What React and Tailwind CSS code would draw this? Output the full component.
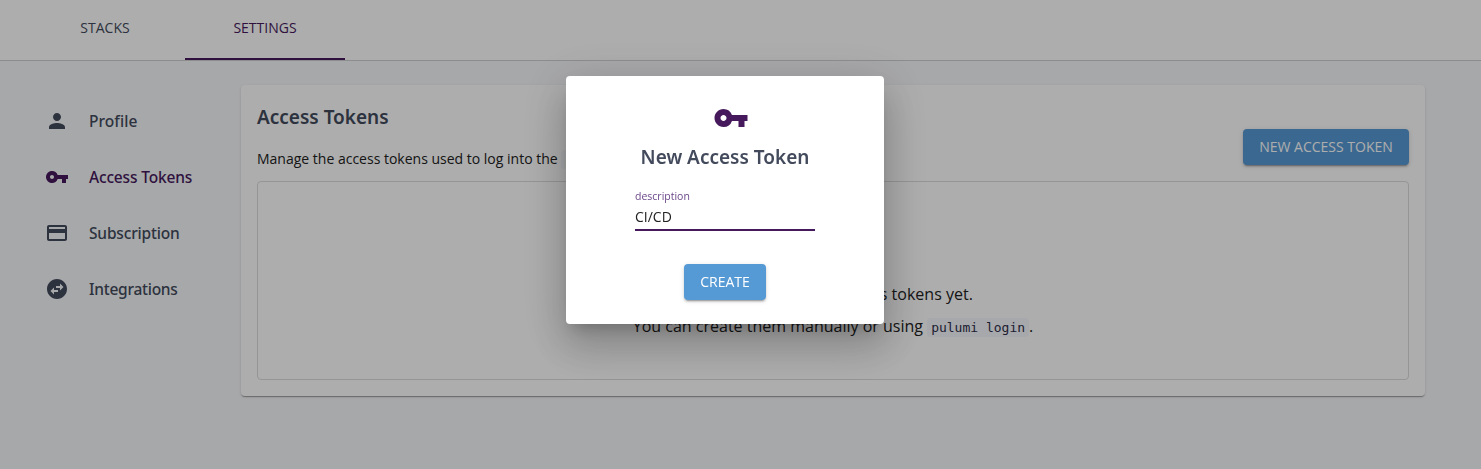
import React from "react";
import { MdPerson, MdVpnKey, MdCreditCard, MdSwapHorizontalCircle } from "react-icons/md";

const NAV = [
  { label: "Profile", Icon: MdPerson, spacing: "tracking-[0.05px]" },
  { label: "Access Tokens", Icon: MdVpnKey, active: true, spacing: "tracking-[-0.17px]" },
  { label: "Subscription", Icon: MdCreditCard, spacing: "tracking-[-0.17px]" },
  { label: "Integrations", Icon: MdSwapHorizontalCircle, spacing: "tracking-[-0.25px]" },
];

const RAISED =
  "shadow-[0_3px_1px_-2px_rgba(0,0,0,0.2),0_2px_2px_0_rgba(0,0,0,0.14),0_1px_5px_0_rgba(0,0,0,0.12)]";

function Button({ children, className }) {
  return (
    <button
      className={`h-9 shrink-0 rounded-[4px] bg-[#569ad5] text-center text-[14px] leading-9 whitespace-nowrap text-white ${RAISED} ${className}`}
    >
      {children}
    </button>
  );
}

function Code({ children }) {
  return (
    <code className="rounded-[4px] bg-[#f7f8fc] px-1 py-0.5 font-['DejaVu_Sans_Mono',monospace] text-[13px] text-[#2d2d49]">
      {children}
    </code>
  );
}

function Header() {
  return (
    <header className="flex h-[61px] border-b border-[#d0d0d0] bg-white pl-[25px] text-[14px]">
      <a className="flex h-[60px] w-40 items-center justify-center pb-1.5 text-[#424a5c]">STACKS</a>
      <a className="flex h-[60px] w-40 items-center justify-center border-b-2 border-[#46195c] pb-1 text-[#46195c]">
        SETTINGS
      </a>
    </header>
  );
}

function Sidebar() {
  return (
    <nav className="w-[241px] shrink-0 pt-8 pl-[45px]">
      {NAV.map(({ label, Icon, active, spacing }) => (
        <a
          key={label}
          className={`flex h-14 items-center gap-5 font-['Noto_Sans',sans-serif] text-[15.5px] font-medium ${spacing} ${active ? "text-[#46195c]" : "text-[#424a5c]"}`}
        >
          <Icon size={24} />
          <span className="leading-6 whitespace-nowrap">{label}</span>
        </a>
      ))}
    </nav>
  );
}

function TokensCard() {
  return (
    <main className="mt-6 flex h-[311px] w-[1184px] flex-col rounded-[4px] bg-white px-4 pb-4 shadow-[0_2px_1px_-1px_rgba(0,0,0,0.2),0_1px_1px_0_rgba(0,0,0,0.14),0_1px_3px_0_rgba(0,0,0,0.12)]">
      <div className="flex h-24 items-start justify-between">
        <div>
          <h1 className="mt-[18px] font-['Noto_Sans',sans-serif] text-[19px] leading-7 font-semibold text-[#424a5c]">
            Access Tokens
          </h1>
          <p className="mt-[18px] text-[14px] leading-5 text-[#212121]">
            Manage the access tokens used to log into the <Code>pulumi</Code> CLI.
          </p>
        </div>
        <Button className="mt-11 w-[166px]">NEW ACCESS TOKEN</Button>
      </div>
      <section className="flex h-[199px] flex-col items-center rounded-[4px] border border-[#dcdcdc] pt-24 text-[16px] leading-8 text-[#212121]">
        <p>You don't have any access tokens yet.</p>
        <p>
          You can create them manually or using <Code>pulumi login</Code>.
        </p>
      </section>
    </main>
  );
}

function Dialog() {
  return (
    <div className="fixed inset-0 flex items-start bg-black/32 pt-[76px] pl-[566px]">
      <div
        role="dialog"
        className="flex h-[248px] w-[318px] flex-col items-center rounded-[4px] bg-white pt-6 shadow-[0_11px_15px_-7px_rgba(0,0,0,0.2),0_24px_38px_3px_rgba(0,0,0,0.14),0_9px_46px_8px_rgba(0,0,0,0.12)]"
      >
        <MdVpnKey size={36} className="ml-3 text-[#46195c]" />
        <h2 className="mt-[7px] font-['Noto_Sans',sans-serif] text-[19px] leading-7 font-semibold text-[#424a5c]">
          New Access Token
        </h2>
        <label className="mt-[17px] flex h-[43px] w-[180px] flex-col border-b-2 border-[#46195c]">
          <span className="text-[10.5px] leading-4 text-[#6b478a]">description</span>
          <span className="mt-[3px] text-[14px] leading-5 text-[#212121]">CI/CD</span>
        </label>
        <Button className="mt-[33px] w-[82px]">CREATE</Button>
      </div>
    </div>
  );
}

export default function App() {
  return (
    <div className="h-[469px] w-[1481px] overflow-hidden bg-[#f7f8fa] font-['Open_Sans',sans-serif]">
      <Header />
      <div className="flex">
        <Sidebar />
        <TokensCard />
      </div>
      <Dialog />
    </div>
  );
}
